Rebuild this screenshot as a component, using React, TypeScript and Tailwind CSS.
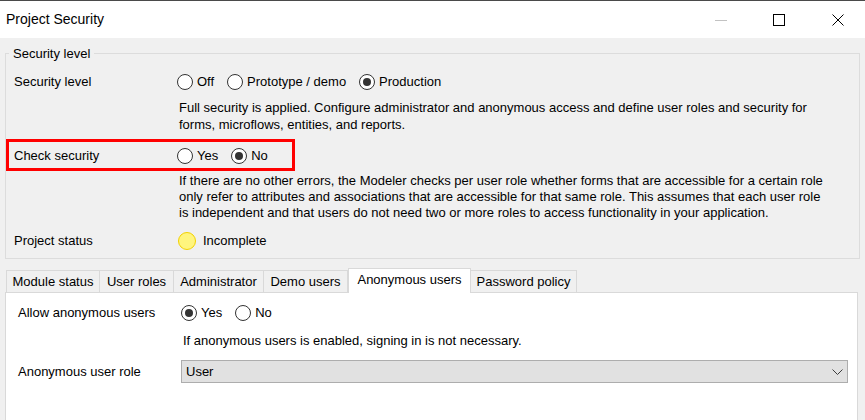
import React from 'react';

const FONT = { fontFamily: '"Liberation Sans", Arial, sans-serif' };

function Radio({ label, checked }: { label: string; checked?: boolean }) {
  return (
    <span className="flex items-center gap-[4px]">
      <span className="flex h-[16px] w-[16px] items-center justify-center rounded-full border border-[#333333] bg-white">
        {checked && <span className="h-[8px] w-[8px] rounded-full bg-[#333333]" />}
      </span>
      <span>{label}</span>
    </span>
  );
}

const TABS = [
  { label: 'Module status', w: 'w-[94px] border-l' },
  { label: 'User roles', w: 'w-[74px]' },
  { label: 'Administrator', w: 'w-[90px]' },
  { label: 'Demo users', w: 'w-[84px]' },
  { label: 'Anonymous users', w: 'w-[123px]', active: true },
  { label: 'Password policy', w: 'w-[106px]' },
];

export default function App() {
  return (
    <div className="h-[420px] w-[865px] overflow-hidden bg-[#f0f0f0] text-[13px] text-black" style={FONT}>
      <div className="h-[1px] bg-[#4a4a4a]" />
      {/* title bar */}
      <div className="flex h-[37px] items-center justify-between bg-white pl-[6px] pr-[21px]">
        <span className="text-[14px]">Project Security</span>
        <div className="flex items-center gap-[46px]">
          <svg width="12" height="12" viewBox="0 0 12 12">
            <path d="M0 6.5H12" stroke="#c2c2c2" strokeWidth="1" />
          </svg>
          <svg width="12" height="12" viewBox="0 0 12 12" className="mr-[1px]">
            <rect x="0.5" y="0.5" width="11" height="11" fill="none" stroke="#000" strokeWidth="1" />
          </svg>
          <svg width="12" height="12" viewBox="0 0 12 12">
            <path d="M0.5 0.5L11.5 11.5M11.5 0.5L0.5 11.5" stroke="#000" strokeWidth="1" />
          </svg>
        </div>
      </div>

      {/* security level group */}
      <fieldset className="mx-[5px] mt-[8px] border border-[#dcdcdc] pb-[7px]">
        <legend className="ml-[3px] px-[4px] leading-[15px]">Security level</legend>

        <div className="mt-[11px] flex h-[20px] items-center pl-[8px]">
          <span className="w-[163px]">Security level</span>
          <div className="flex items-center gap-[13px]">
            <Radio label="Off" />
            <Radio label="Prototype / demo" />
            <Radio label="Production" checked />
          </div>
        </div>
        <p className="mt-[7px] pl-[173px] leading-[17px]">
          Full security is applied. Configure administrator and anonymous access and define user roles and security for
          <br />
          forms, microflows, entities, and reports.
        </p>

        <div className="mt-[6px] flex h-[32px] w-[289px] items-center border-[3px] border-[#ff0000] pl-[5px] pt-[1px]">
          <span className="w-[163px]">Check security</span>
          <div className="flex items-center gap-[13px]">
            <Radio label="Yes" />
            <Radio label="No" checked />
          </div>
        </div>
        <p className="mt-[2px] pl-[173px] leading-[16px]">
          If there are no other errors, the Modeler checks per user role whether forms that are accessible for a certain role
          <br />
          only refer to attributes and associations that are accessible for that same role. This assumes that each user role
          <br />
          is independent and that users do not need two or more roles to access functionality in your application.
        </p>

        <div className="mt-[10px] flex h-[20px] items-center pl-[8px]">
          <span className="w-[164px]">Project status</span>
          <span className="h-[18px] w-[18px] rounded-full border border-[#f2d100] bg-[#fff57e]" />
          <span className="ml-[7px]">Incomplete</span>
        </div>
      </fieldset>

      {/* tabs */}
      <div className="ml-[5px] mr-[7px] mt-[9px]">
        <div className="flex items-end pl-[1px]">
          {TABS.map((t) =>
            t.active ? (
              <div
                key={t.label}
                className={`relative z-10 -mb-px flex h-[25px] items-center justify-center border-x border-t border-[#d9d9d9] bg-white pb-[3px] ${t.w}`}
              >
                {t.label}
              </div>
            ) : (
              <div
                key={t.label}
                className={`flex h-[22px] items-center justify-center border-r border-t border-[#d9d9d9] bg-[#f0f0f0] ${t.w}`}
              >
                {t.label}
              </div>
            )
          )}
        </div>
        <div className="h-[140px] border border-[#d9d9d9] bg-white pl-[12px] pt-[10px]">
          <div className="flex h-[20px] items-center">
            <span className="w-[163px]">Allow anonymous users</span>
            <div className="flex items-center gap-[13px]">
              <Radio label="Yes" checked />
              <Radio label="No" />
            </div>
          </div>
          <p className="mt-[10px] pl-[165px] leading-[16px]">
            If anonymous users is enabled, signing in is not necessary.
          </p>
          <div className="mt-[11px] flex items-center">
            <span className="w-[163px]">Anonymous user role</span>
            <div className="flex h-[23px] w-[667px] items-center justify-between border border-[#adadad] bg-[#e1e1e1] pl-[4px] pr-[4px]">
              <span>User</span>
              <svg width="11" height="6" viewBox="0 0 11 6">
                <path d="M0.5 0.5L5.5 5.5L10.5 0.5" fill="none" stroke="#3c3c3c" strokeWidth="1" />
              </svg>
            </div>
          </div>
        </div>
      </div>
    </div>
  );
}
